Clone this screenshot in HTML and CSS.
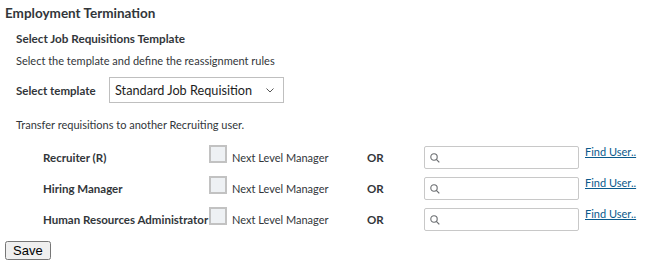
FILE: index.html
```
<!DOCTYPE html>
<html>
<head>
    <meta charset="UTF-8">
    <title>Employment Termination</title>
    <link rel="stylesheet" href="styles.css">
</head>
<body>
    <div class="page">
        <h1 class="title">Employment Termination</h1>
        <div class="section">
            <h2 class="subtitle">Select Job Requisitions Template</h2>
            <p class="hint">Select the template and define the reassignment rules</p>
            <div class="template-row">
                <span class="label">Select template</span>
                <div class="fake-select">
                    <span>Standard Job Requisition</span>
                    <svg width="8" height="5" viewBox="0 0 8 5"><path d="M0.5 0.5 L4 4 L7.5 0.5" fill="none" stroke="#555" stroke-width="1"/></svg>
                </div>
            </div>
            <p class="hint transfer">Transfer requisitions to another Recruiting user.</p>
            <div class="rules">
                <span class="label">Recruiter (R)</span>
                <span class="check"></span>
                <span class="option">Next Level Manager</span>
                <span class="or">OR</span>
                <div class="search">
                    <svg width="10" height="10" viewBox="0 0 10 10"><circle cx="4" cy="4" r="3.2" fill="none" stroke="#6a6d70" stroke-width="1.1"/><path d="M6.3 6.3 L9.3 9.3" stroke="#6a6d70" stroke-width="1.2"/></svg>
                </div>
                <a class="find" href="#">Find User..</a>

                <span class="label">Hiring Manager</span>
                <span class="check"></span>
                <span class="option">Next Level Manager</span>
                <span class="or">OR</span>
                <div class="search">
                    <svg width="10" height="10" viewBox="0 0 10 10"><circle cx="4" cy="4" r="3.2" fill="none" stroke="#6a6d70" stroke-width="1.1"/><path d="M6.3 6.3 L9.3 9.3" stroke="#6a6d70" stroke-width="1.2"/></svg>
                </div>
                <a class="find" href="#">Find User..</a>

                <span class="label">Human Resources Administrator</span>
                <span class="check"></span>
                <span class="option">Next Level Manager</span>
                <span class="or">OR</span>
                <div class="search">
                    <svg width="10" height="10" viewBox="0 0 10 10"><circle cx="4" cy="4" r="3.2" fill="none" stroke="#6a6d70" stroke-width="1.1"/><path d="M6.3 6.3 L9.3 9.3" stroke="#6a6d70" stroke-width="1.2"/></svg>
                </div>
                <a class="find" href="#">Find User..</a>
            </div>
        </div>
        <button class="save">Save</button>
    </div>
</body>
</html>
```
FILE: styles.css
```
* {
    margin: 0;
    padding: 0;
    box-sizing: border-box;
}

body {
    font-family: Lato, "Open Sans", sans-serif;
    color: #32363a;
    background: #fff;
}

.page {
    padding: 5px 5px 0 5px;
}

.title {
    font-size: 13.5px;
    font-weight: bold;
    line-height: 17px;
}

.section {
    padding-left: 11px;
}

.subtitle {
    font-size: 11.7px;
    font-weight: bold;
    line-height: 15px;
    margin-top: 9px;
}

.hint {
    font-size: 11px;
    line-height: 15px;
    margin-top: 7px;
}

.label {
    font-size: 11.5px;
    font-weight: bold;
    white-space: nowrap;
}

.template-row {
    display: flex;
    align-items: center;
    margin-top: 9px;
}

.template-row .label {
    width: 93px;
}

.fake-select {
    width: 175px;
    height: 26px;
    border: 1px solid #bfbfbf;
    display: flex;
    align-items: center;
    justify-content: space-between;
    padding: 0 9px 0 5px;
    font-size: 12.7px;
    color: #1d1d1d;
    white-space: nowrap;
}

.transfer {
    margin-top: 14px;
}

.rules {
    display: grid;
    grid-template-columns: 166px 23px 135px 57px 161px auto;
    grid-auto-rows: 31px;
    align-items: center;
    padding-left: 27px;
    margin-top: 10px;
}

.check {
    width: 18px;
    height: 18px;
    border: 2px solid #c2c2c2;
    background: #eef1f4;
    margin-top: -7px;
}

.option {
    font-size: 11px;
}

.or {
    font-size: 11.5px;
    font-weight: bold;
}

.search {
    width: 155px;
    height: 23px;
    border: 1px solid #c8c8c8;
    border-radius: 2px;
    display: flex;
    align-items: center;
    padding-left: 5px;
}

.find {
    font-size: 11px;
    color: #0a5a8c;
    align-self: start;
    margin-top: 3px;
}

.save {
    margin-top: 6px;
    font-family: "Liberation Sans", Arial, sans-serif;
    font-size: 13px;
    padding: 0 6px;
}
```
